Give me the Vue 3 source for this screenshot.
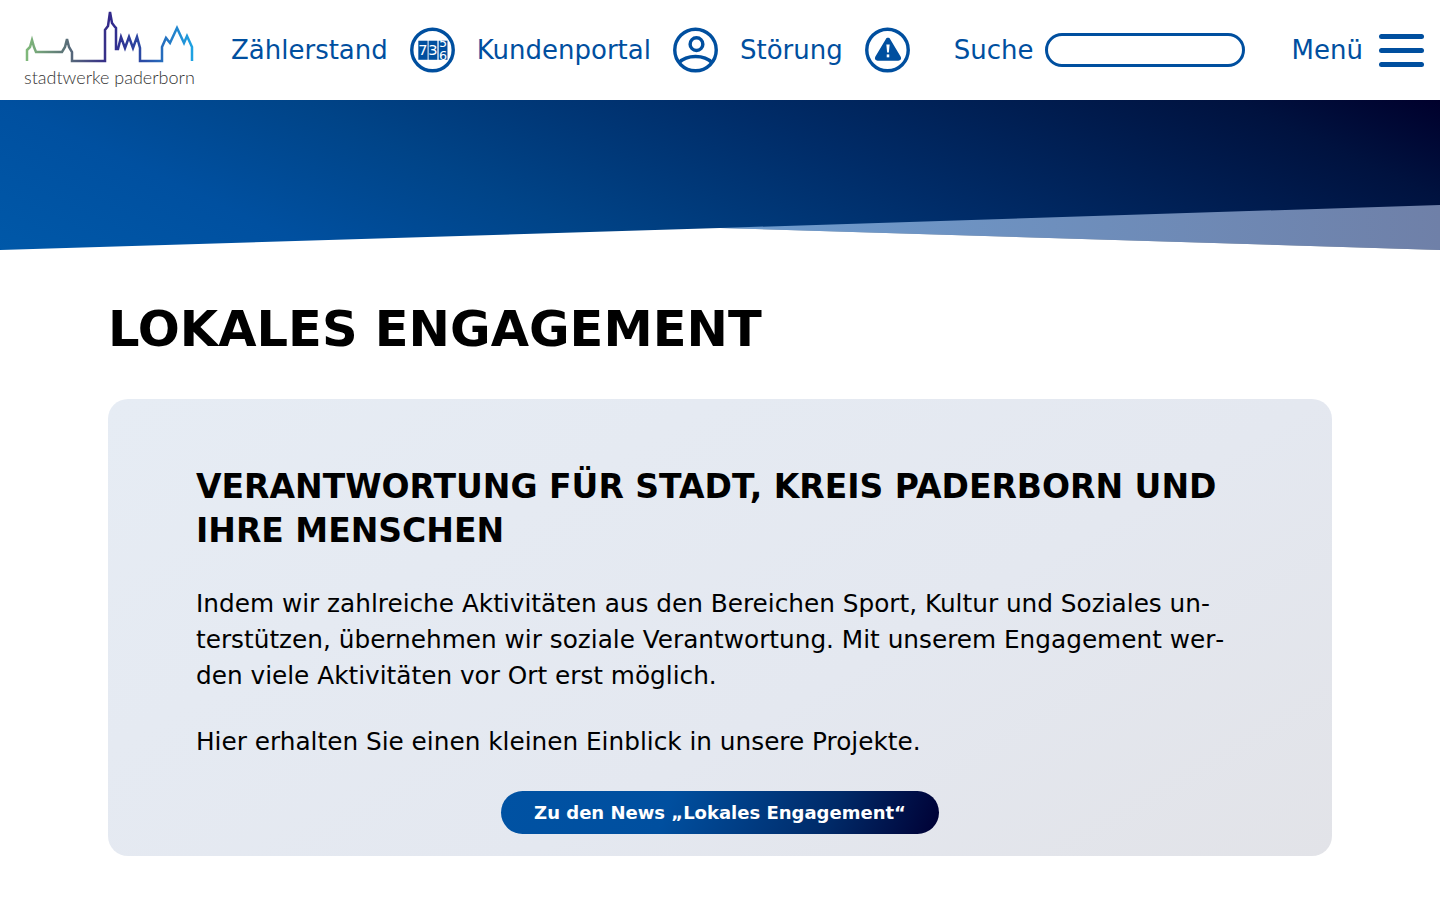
<template>
  <header class="top">
    <a class="logo">
      <svg class="skyline" width="172" height="52" viewBox="24 11 172 52">
        <defs>
          <linearGradient id="sky" x1="27" y1="0" x2="192" y2="0" gradientUnits="userSpaceOnUse">
            <stop offset="0" stop-color="#7fb87a" />
            <stop offset="0.24" stop-color="#5a6f78" />
            <stop offset="0.5" stop-color="#33288a" />
            <stop offset="0.72" stop-color="#2a4fa8" />
            <stop offset="1" stop-color="#1ea2e2" />
          </linearGradient>
        </defs>
        <path class="sky-line" d="M27 61V50L30 47L32 40L34 47L36 52H62L65 47L67 39L69 47L72 52V61H105V30L108 26L110 12L112 23L115 27L116 28V49H118L121 37L125 48L129 37L133 48L137 37L140 48V61H162V47L166 38L170 43L177 28L184 43L187 36L192 47V61" />
      </svg>
      <span class="logo-text">stadtwerke paderborn</span>
    </a>

    <nav class="nav">
      <a class="nav-item zaehler">
        <span>Zählerstand</span>
        <svg class="round-icon" viewBox="0 0 46 46">
          <circle cx="23" cy="23" r="21.200" class="ring" />
          <rect x="8.500" y="13.500" width="9.500" height="19.500" class="solid" />
          <rect x="19" y="13.500" width="9" height="19.500" class="solid" />
          <rect x="29.300" y="13.500" width="9" height="19.500" class="solid" />
          <text x="13.300" y="28.500" class="digit">7</text>
          <text x="23.500" y="28.500" class="digit">3</text>
          <text x="33.800" y="20" class="digit small">5</text>
          <text x="33.800" y="33" class="digit small">6</text>
        </svg>
      </a>
      <a class="nav-item portal">
        <span>Kundenportal</span>
        <svg class="round-icon" viewBox="0 0 46 46">
          <circle cx="23" cy="23" r="21.200" class="ring" />
          <circle cx="24" cy="17" r="6.500" class="ring" />
          <path class="ring" d="M6 36C14 27.500 32 27.500 40 36" />
        </svg>
      </a>
      <a class="nav-item stoerung">
        <span>Störung</span>
        <svg class="round-icon" viewBox="0 0 46 46">
          <circle cx="23" cy="23" r="21.200" class="ring" />
          <path class="solid" d="M23.500 10.500C24.500 10.500 25.300 11 25.800 12L36.500 30C37.500 32 36.500 34 34 34H13C10.500 34 9.500 32 10.500 30L21.200 12C21.700 11 22.500 10.500 23.500 10.500Z" />
          <path d="M21.800 17.500H25.200L24.400 25.500H22.600Z" fill="#fff" />
          <rect x="22.200" y="27.500" width="2.600" height="3" fill="#fff" />
        </svg>
      </a>
      <div class="nav-item suche">
        <span>Suche</span>
        <div class="search-box"></div>
      </div>
      <a class="nav-item menu">
        <span>Menü</span>
        <div class="burger"><i></i><i></i><i></i></div>
      </a>
    </nav>
  </header>

  <div class="hero">
    <svg class="hero-cut" width="1440" height="45" viewBox="0 0 1440 45">
      <defs>
        <linearGradient id="wedge" x1="720" y1="0" x2="1440" y2="0" gradientUnits="userSpaceOnUse">
          <stop offset="0" stop-color="#6d9ccf" />
          <stop offset="1" stop-color="#6f80a8" />
        </linearGradient>
      </defs>
      <path d="M720 23L1440 0V45Z" fill="url(#wedge)" />
      <path d="M0 45L720 23L1440 45Z" fill="#fff" />
    </svg>
  </div>

  <main class="content">
    <h1>LOKALES ENGAGEMENT</h1>
    <section class="card">
      <h2>VERANTWORTUNG FÜR STADT, KREIS PADERBORN UND IHRE MENSCHEN</h2>
      <p>Indem wir zahlreiche Aktivitäten aus den Bereichen Sport, Kultur und Soziales un&shy;terstützen, übernehmen wir soziale Verantwortung. Mit unserem Engagement wer&shy;den viele Aktivitäten vor Ort erst möglich.</p>
      <p>Hier erhalten Sie einen kleinen Einblick in unsere Projekte.</p>
      <div class="btn-row">
        <a class="btn">Zu den News „Lokales Engagement“</a>
      </div>
    </section>
  </main>
</template>

<script setup>
</script>

<style scoped>
.top {
  height: 100px;
  display: flex;
  align-items: center;
  background: #fff;
  color: #004f9f;
}
.logo {
  width: 170px;
  margin-left: 24px;
  margin-right: 37px;
  display: flex;
  flex-direction: column;
  padding-top: 11px;
  height: 100px;
  box-sizing: border-box;
}
.skyline {
  display: block;
}
.sky-line {
  fill: none;
  stroke: url(#sky);
  stroke-width: 2.500;
}
.logo-text {
  font-family: Lato, sans-serif;
  font-weight: 300;
  font-size: 18px;
  line-height: 24px;
  color: #333;
  white-space: nowrap;
  margin-top: 2px;
}
.nav {
  display: flex;
  align-items: center;
  flex: 1;
}
.nav-item {
  display: flex;
  align-items: center;
  font-family: "DejaVu Sans", sans-serif;
  font-size: 26px;
  white-space: nowrap;
}
.zaehler { gap: 22px; margin-right: 22px; }
.portal { gap: 22px; margin-right: 22px; }
.stoerung { gap: 22px; margin-right: 44px; }
.suche { gap: 12px; margin-right: 46px; }
.menu { gap: 16px; }
.round-icon {
  width: 45px;
  height: 46px;
  display: block;
}
.ring {
  fill: none;
  stroke: #004f9f;
  stroke-width: 3.500;
}
.solid {
  fill: #004f9f;
}
.digit {
  fill: #fff;
  font-family: "DejaVu Sans", sans-serif;
  font-size: 15px;
  text-anchor: middle;
}
.digit.small {
  font-size: 13px;
}
.search-box {
  width: 200px;
  height: 34px;
  box-sizing: border-box;
  border: 3px solid #004f9f;
  border-radius: 17px;
}
.burger {
  width: 45px;
  height: 33px;
  display: flex;
  flex-direction: column;
  justify-content: space-between;
}
.burger i {
  display: block;
  height: 5px;
  border-radius: 2.500px;
  background: #004f9f;
}
.hero {
  position: relative;
  height: 150px;
  background: linear-gradient(25deg, #0058a8 0%, #0050a0 18%, #004488 35%, #002c68 59%, #00123f 88%, #00002c 100%);
}
.hero-cut {
  position: absolute;
  left: 0;
  bottom: 0;
  display: block;
}
.content {
  padding: 51px 108px 44px;
  font-family: "DejaVu Sans", sans-serif;
  color: #000;
}
h1 {
  margin: 0 0 42px;
  font-size: 49.500px;
  line-height: 56px;
  font-weight: 700;
}
.card {
  height: 457px;
  box-sizing: border-box;
  padding: 64px 88px 0;
  border-radius: 20px;
  background: linear-gradient(150deg, #e6ecf4 0%, #e4e8f0 60%, #e2e3e8 100%);
}
h2 {
  margin: 0 0 33px;
  padding-top: 2px;
  font-size: 33px;
  line-height: 44px;
  font-weight: 700;
}
p {
  max-width: 1040px;
  margin: 0 0 30px;
  font-size: 24.750px;
  line-height: 36px;
}
.btn-row {
  display: flex;
  justify-content: center;
  margin-top: 31px;
}
.btn {
  width: 438px;
  height: 43px;
  display: flex;
  align-items: center;
  justify-content: center;
  border-radius: 22px;
  color: #fff;
  font-size: 18px;
  font-weight: 700;
  background: linear-gradient(110deg, #0052a3 0%, #004f9f 38%, #002a68 75%, #000034 100%);
}
</style>

<style>
html, body {
  background: #fff;
}
</style>
